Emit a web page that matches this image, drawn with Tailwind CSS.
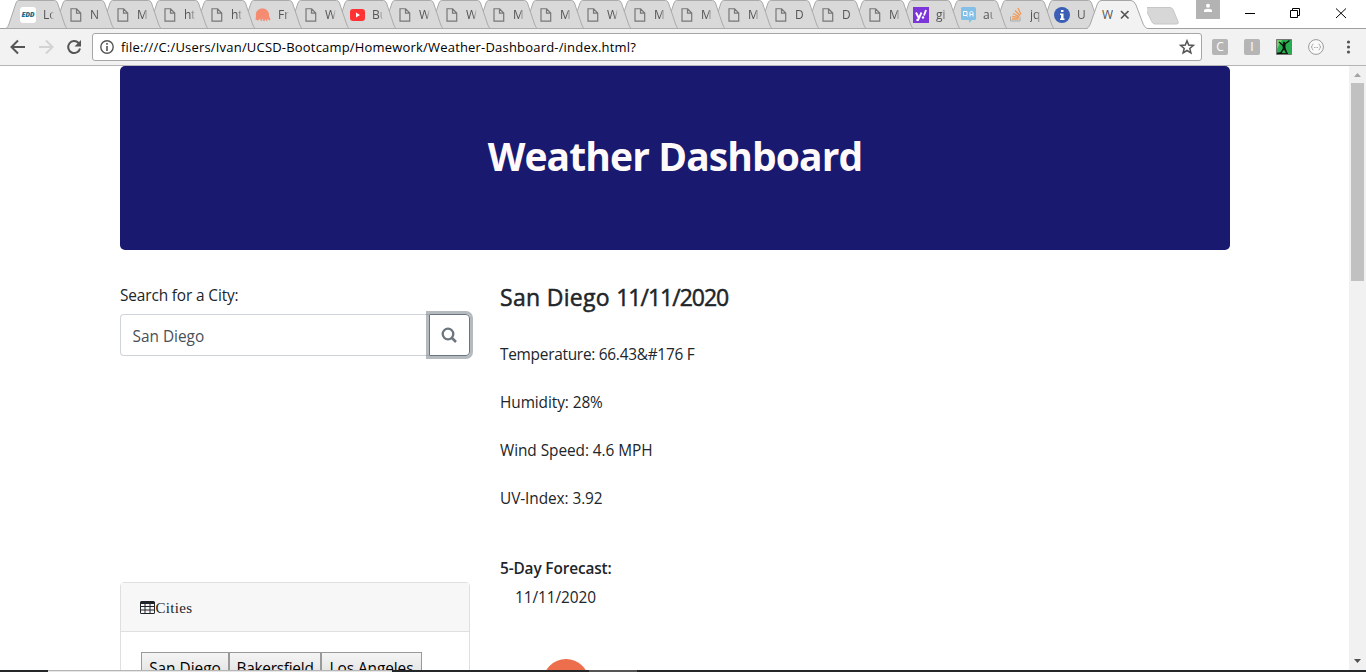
<!DOCTYPE html>
<html lang="en">
<head>
<meta charset="utf-8">
<title>Weather Dashboard</title>
<script src="https://cdn.jsdelivr.net/npm/@tailwindcss/browser@4"></script>
</head>
<body class="w-[1366px] h-[672px] overflow-hidden bg-white font-['Open_Sans','Noto_Sans',sans-serif] text-[#212529] flex flex-col relative">

<svg class="hidden">
  <defs>
    <symbol id="doc" viewBox="0 0 12 14"><path d="M1 .75h5.6L10.7 5v8.2H1zM6.5 1v4.2h4" fill="none" stroke="#777" stroke-width="1.2"/></symbol>
    <symbol id="tab" viewBox="0 0 62 29"><path d="M0 28.5 Q2 27 3 24 L10 3 Q11 .5 12.500 .5 H48.500 Q50.500 .5 51.500 3 L58.500 24 Q59.500 27 61 28.5Z" fill="#d9d9d9" stroke="#aaa"/></symbol>
  </defs>
</svg>

<header class="h-[66px] shrink-0 flex flex-col">
  <div id="strip" class="isolate h-[29px] shrink-0 flex pl-[6px] border-b border-[#a0a0a0] bg-white text-[12px] leading-[30px] text-[#555]"></div>
  <div class="h-[37px] bg-[#f2f2f2] border-b border-[#b6b4b6] flex items-center pr-[11px]">
    <svg class="w-[92px] h-[36px] shrink-0" viewBox="0 0 92 36" fill="none">
      <path d="M25 18H12M18 11.5 11.5 18l6.5 6.5" stroke="#555" stroke-width="2"/>
      <path d="M39 18h13M46 11.500l6.500 6.500-6.500 6.500" stroke="#d3d3d3" stroke-width="2"/>
      <path d="M78.600 14A6 6 0 1 0 80 19.500" stroke="#555" stroke-width="2"/><path d="M81 11v6.500h-6.500z" fill="#555"/>
    </svg>
    <div class="w-[1110px] h-[28px] border border-[#a6a6a6] rounded-[3px] bg-white flex items-center pl-[7px] pr-[6px]">
      <svg class="size-[14px] shrink-0" viewBox="0 0 14 14"><circle cx="7" cy="7" r="6.200" fill="none" stroke="#555" stroke-width="1.400"/><path d="M6.200 3h1.600v1.700H6.200zM6.200 6h1.600v5H6.200z" fill="#555"/></svg>
      <span class="ml-[7px] pt-[1px] grow text-[13px] tracking-[0.19px] text-black whitespace-nowrap">file:///C:/Users/Ivan/UCSD-Bootcamp/Homework/Weather-Dashboard-/index.html?</span>
      <svg class="w-[16px] h-[16px]" viewBox="0 0 16 16"><path d="M8 1.800 9.700 6l4.600.4-3.500 3 1.100 4.500L8 11.500l-3.900 2.400 1.100-4.500-3.500-3L6.300 6z" fill="none" stroke="#555" stroke-width="1.500"/></svg>
    </div>
    <div class="ml-[10px] size-[16px] rounded-[2px] bg-[#b5b5b5] text-white text-[12px] leading-[16px] text-center">C</div>
    <div class="ml-[16px] size-[16px] rounded-[2px] bg-[#b5b5b5] text-white text-[12px] leading-[16px] text-center">I</div>
    <svg class="ml-[16px] w-[16px] h-[16px]" viewBox="0 0 16 16"><path d="M.5.5h15v15H.5z" fill="#28ad52" stroke="#777"/><path d="M1 1h5L1 10z" fill="#6fd06a"/><path d="M3 3 7 6.500 13.500 1.500" fill="none" stroke="#080f08" stroke-width="1.200"/><path d="M6.500 5.800 9.500 5V9l2 5H10L8 10.500 5.500 14H4l2.800-4.500z" fill="#080f08"/><circle cx="8" cy="4" r="1.200" fill="#080f08"/><path d="M1 15v-1.200l4-.5 2 1 5-.3V15z" fill="#080f08"/></svg>
    <svg class="ml-[16px] w-[16px] h-[16px]" viewBox="0 0 16 16" fill="none" stroke="#9a9a9a"><circle cx="8" cy="8" r="7.400" fill="#fafafa"/><path d="M5.500 5q-1.300 0-1.300 1.500T3 8q1.200 0 1.200 1.500T5.500 11M10.500 5q1.300 0 1.300 1.500T13 8q-1.200 0-1.200 1.500T10.500 11M6 8.500h1M7.500 8.500h1M9 8.500h1" stroke-width=".8"/></svg>
    <svg class="ml-[22px] w-[5px] h-[14px]" viewBox="0 0 5 14" fill="#555"><circle cx="2.500" cy="2" r="1.600"/><circle cx="2.500" cy="7" r="1.600"/><circle cx="2.500" cy="12" r="1.600"/></svg>
  </div>
</header>

<div class="flex h-[604px]">
  <main class="w-[1349px] pl-[120px] overflow-hidden">
    <div class="w-[1110px] h-[184px] rounded-[5px] bg-[#191970] flex items-center justify-center pb-[6px]">
      <h1 class="text-[39px] tracking-[-0.9px] font-bold text-[#fffafa] leading-none whitespace-nowrap">Weather Dashboard</h1>
    </div>
    <div class="flex gap-[30px] text-[15.400px] leading-[24px]">
      <section class="w-[350px] pt-[34px]">
        <label class="block w-fit whitespace-nowrap tracking-[-0.13px]">Search for a City:</label>
        <div class="mt-[6px] flex h-[42px]">
          <div class="w-[309px] border border-r-0 border-[#ced4da] rounded-l-[4px] px-[11.500px] leading-[43px] text-[#495057]">San Diego</div>
          <div class="w-[41px] border border-[#6c757d] rounded-r-[4px] ring-[3px] ring-[#6c757d]/50 flex items-center justify-center">
            <svg class="w-[16px] h-[16px] mr-px" viewBox="0 0 16 16" fill="none" stroke="#6c757d"><circle cx="7" cy="7" r="5.300" stroke-width="2.300"/><path d="m11 11 4 4" stroke-width="2.500"/></svg>
          </div>
        </div>
        <div class="mt-[226px] h-[120px] border border-[#dfdfdf] rounded-t-[4px]">
          <div class="h-[49px] bg-[#f7f7f7] border-b border-[#dfdfdf] pl-[19.400px] flex items-center font-['Liberation_Serif',serif] text-[15px] tracking-[0.35px]">
            <svg class="w-[15px] h-[13px]" viewBox="0 0 15 13"><path d="M1.500 0h12Q15 0 15 1.500v10q0 1.500-1.500 1.500h-12Q0 13 0 11.500v-10Q0 0 1.500 0M1 3v2h3.500V3zM5.500 3v2h4V3zM10.500 3v2H14V3zM1 6v2.500h3.500V6zM5.500 6v2.500h4V6zM10.500 6v2.500H14V6zM1 9.500V12h3.500V9.500zM5.500 9.500V12h4V9.500zM10.500 9.500V12H14V9.500z" fill="#212529" fill-rule="evenodd"/></svg>
            <span class="pt-[2px]">Cities</span>
          </div>
          <div class="pl-[20px] pt-[20px] flex text-black">
            <div class="w-[88px] h-[30px] border border-[#999] bg-linear-to-b from-[#f5f5f5] to-[#ddd] text-center leading-[31px] whitespace-nowrap">San Diego</div>
            <div class="w-[92px] h-[30px] border border-[#999] bg-linear-to-b from-[#f5f5f5] to-[#ddd] text-center leading-[31px] whitespace-nowrap tracking-[-0.25px]">Bakersfield</div>
            <div class="w-[101px] h-[30px] border border-[#999] bg-linear-to-b from-[#f5f5f5] to-[#ddd] text-center leading-[31px] whitespace-nowrap tracking-[-0.07px]">Los Angeles</div>
          </div>
        </div>
      </section>
      <section class="pt-[33px] flex flex-col items-start whitespace-nowrap">
        <h2 class="text-[23px] leading-[29px] tracking-[0.3px] [-webkit-text-stroke:0.5px_#212529]">San Diego <span class="tracking-[-1px]">11/11/2020</span></h2>
        <p class="mt-[31px] tracking-[-0.26px]">Temperature: 66.43&amp;#176 F</p>
        <p class="mt-[24px] tracking-[-0.08px]">Humidity: 28%</p>
        <p class="mt-[24px] tracking-[-0.06px]">Wind Speed: 4.6 MPH</p>
        <p class="mt-[24px] tracking-[-0.08px]">UV-Index: 3.92</p>
        <h3 class="mt-[46px] font-semibold tracking-[-0.14px]">5-Day Forecast:</h3>
        <p class="mt-[5px] ml-[15px] tracking-[-0.08px]">11/11/2020</p>
        <div class="mt-[49px] ml-[43px] size-[46px] rounded-full bg-[#ec6e4c] shrink-0"></div>
      </section>
    </div>
  </main>
  <aside class="w-[17px] bg-[#f1f1f1] flex flex-col items-center">
    <svg class="w-[17px] h-[17px]" viewBox="0 0 17 17"><path d="M5 11h7L8.500 7z" fill="#a3a3a3"/></svg>
    <div class="w-[13px] h-[198px] bg-[#c1c1c1]"></div>
    <svg class="mt-auto w-[17px] h-[17px]" viewBox="0 0 17 17"><path d="M5 6h7l-3.500 4z" fill="#505050"/></svg>
  </aside>
</div>
<div class="h-[2px] shrink-0 bg-[#252627] flex"><div class="ml-[48px] w-[344px] border-t border-[#b5b5b5] bg-[#e6e6e6]"></div><div class="ml-[197px] w-[48px] bg-[#555]"></div></div>

<script>
const D='<svg class="w-[12px] h-[14px]"><use href="#doc"/></svg>';
const icons={
 0:'<div class="size-[16px] rounded-[3px] bg-white text-[7px] leading-[16px] font-extrabold italic text-[#176d8a] text-center tracking-[-0.2px]">EDD</div>',
 5:'<svg class="w-[16px] h-[14px]" viewBox="0 0 16 14"><path d="M1 8C0 3 4 .5 7.500 .5S14.500 3 14 8l1.500 3.500-1 1L12 10.500l.5 2.500-1.500-.2-1-2-.5 2.700-1.300-.8L8 10l-1.200 3-1.500-.5.2-2L3 12.500 .5 11.500z" fill="#f58b70"/></svg>',
 7:'<svg class="w-[15px] h-[12px]" viewBox="0 0 15 12"><rect width="15" height="12" rx="3" fill="#f33"/><path d="M6 3.500v5L10 6z" fill="#fff"/></svg>',
 19:'<svg class="w-[16px] h-[16px]" viewBox="0 0 16 16"><path d="M0 0h16v16H0z" fill="#7b35d9"/><path d="m3 5.500 2.500 5M8.500 5.500 5 13H3.500M13 3l-2 5.500" stroke="#fff" stroke-width="1.900" fill="none"/><circle cx="10" cy="10.500" r="1.200" fill="#fff"/></svg>',
 20:'<svg class="w-[15px] h-[16px]" viewBox="0 0 15 16"><path d="M1.500 0h12Q15 0 15 1.500v10q0 1.500-1.500 1.500H11L8 16v-3H1.500Q0 13 0 11.500v-10Q0 0 1.500 0" fill="#82c0e8"/><path d="M2.500 4.500h3.500v4H2.500zM5 8l1.500 1.500M9 9.500v-4l1.500-1.500L12 5.500v4M9 7.500h3" fill="none" stroke="#fff"/></svg>',
 21:'<svg class="w-[13px] h-[15px]" viewBox="0 0 13 15" fill="none"><path d="M.5 9.500v4.500h9.500V9.500" stroke="#aaa"/><path d="M2 12h6.500M2.200 9.500l6.500 1M3 6.500l6 3M5 3.500l5 5M8 1l3 6.500" stroke="#f29a55" stroke-width="1.300"/></svg>',
 22:'<svg class="w-[16px] h-[16px]" viewBox="0 0 16 16"><circle cx="8" cy="8" r="8" fill="#3b5fb5"/><path d="M7 3h2.500v2H7zM6 6.500h3.500v5h1V13H6v-1.500h1V8H6z" fill="#fff"/></svg>'};
const names=['Lo','N','M','ht','ht','Fr','W','Bu','W','W','M','M','W','M','M','M','D','D','M','gi','au','jq','U'];
let h='';
names.forEach((n,i)=>{h+=`<div class="relative w-[47px] h-[29px] shrink-0" style="z-index:${names.length-i}"><svg class="absolute left-0 top-0 w-[62px] h-[29px]"><use href="#tab"/></svg><div class="absolute inset-y-0 left-[13px] w-[36px] flex items-center"><span class="w-[17px] flex justify-end shrink-0 ${icons[i]?'':'pr-px'}">${icons[i]||D}</span><span class="ml-[7px] w-[11px] overflow-hidden whitespace-nowrap shrink-0 mask-r-from-65% mask-r-to-100%">${n}</span></div></div>`});
h+=`<div class="relative z-30 w-[60px] h-[29px] shrink-0"><svg class="absolute left-0 top-0 w-[61px] h-[30px]" viewBox="0 0 61 30"><path d="M0 29C2 27 3 25 4 22L10 5Q11.500 .5 14 .5H44Q47 .5 49 5L55 21Q57.500 28.500 61 28.500V30H0z" fill="#f2f2f2"/><path d="M0 28.500C2 27 3 25 4 22L10 5Q11.500 .5 14 .5H44Q47 .5 49 5L55 21Q57.500 28.500 61 28.500" fill="none" stroke="#a6a6a6"/><path d="m34 11 7.500 7.500M41.500 11 34 18.500" stroke="#555" stroke-width="1.700"/></svg><span class="absolute left-[15px] top-0 w-[11px] overflow-hidden">W</span></div>
<svg class="w-[213px] h-[28px] shrink-0" viewBox="1147 0 213 28" fill="none"><path d="M1147 7.500h23q2 0 3 2l5 12q1 2.500-1.500 2.500h-21.500q-2 0-3-2l-6-12q-.8-2.500 1.500-2.500" fill="#d7d7d7" stroke="#c6c6c6"/><path d="M1196 0h24v19h-24z" fill="#b3b3b3"/><circle cx="1208" cy="5.800" r="2" fill="#fff"/><path d="M1204 12V10.500q0-1.800 4-1.800t4 1.800V12z" fill="#fff"/><path d="M1245 13.500h10M1290.500 10.500h7v7h-7zM1292.500 10.500v-2h7v7h-2M1336 8.500l10 9.500M1346 8.500l-10 9.500" stroke="#000"/></svg>`;
document.getElementById('strip').innerHTML=h;
</script>
</body>
</html>
